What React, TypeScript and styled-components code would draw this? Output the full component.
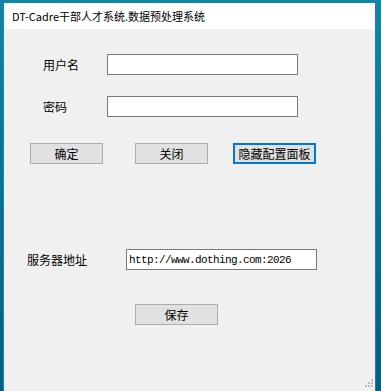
import React from "react";
import styled, { createGlobalStyle, css } from "styled-components";

const Global = createGlobalStyle`
  html, body { margin: 0; padding: 0; }
  body {
    width: 381px;
    height: 391px;
    overflow: hidden;
    background: linear-gradient(180deg, #0f87a3 0%, #0a7594 40%, #05607f 100%);
    font-family: "Noto Sans CJK SC", "Noto Sans", sans-serif;
  }
`;

const Desktop = styled.div`
  display: flex;
  padding: 3px 0 0 3px;
  height: 388px;
`;

const Window = styled.div`
  position: relative;
  width: 371px;
  height: 388px;
  display: flex;
  flex-direction: column;
  border-left: 1px solid #1c7fc4;
  border-right: 1px solid #1878d0;
`;

const TitleBar = styled.div`
  height: 26px;
  background: #ffffff;
  display: flex;
  align-items: center;
  padding-left: 8px;
  font-size: 11px;
  color: #000;
  white-space: nowrap;
`;

const Body = styled.div`
  flex: 1;
  background: #f0f0f0;
  display: flex;
  flex-direction: column;
`;

const Row = styled.div<{ $top: number; $left: number }>`
  display: flex;
  align-items: center;
  height: 21px;
  margin-top: ${(p) => p.$top}px;
  padding-left: ${(p) => p.$left}px;
`;

const Label = styled.span<{ $w: number }>`
  width: ${(p) => p.$w}px;
  font-size: 12px;
  color: #000;
  white-space: nowrap;
`;

const TextBox = styled.div`
  box-sizing: border-box;
  width: 191px;
  height: 21px;
  background: #fff;
  border: 1px solid #7a7a7a;
  display: flex;
  align-items: center;
  padding-left: 2px;
  font-family: "Liberation Mono", "DejaVu Sans Mono", monospace;
  font-size: 11px;
  letter-spacing: -0.6px;
  color: #000;
`;

const Button = styled.div<{ $w: number; $gap?: number; $focus?: boolean }>`
  box-sizing: border-box;
  width: ${(p) => p.$w}px;
  height: 21px;
  margin-left: ${(p) => p.$gap ?? 0}px;
  background: #e1e1e1;
  border: 1px solid #adadad;
  display: flex;
  align-items: center;
  justify-content: center;
  font-size: 12px;
  color: #000;
  white-space: nowrap;
  ${(p) =>
    p.$focus &&
    css`
      border: 2px solid #0078d7;
    `}
`;

const Grip = styled.svg`
  position: absolute;
  right: 2px;
  bottom: 2px;
`;

export default function App() {
  return (
    <>
      <Global />
      <Desktop>
        <Window>
          <TitleBar>DT-Cadre干部人才系统.数据预处理系统</TitleBar>
          <Body>
            <Row $top={25} $left={39}>
              <Label $w={64}>用户名</Label>
              <TextBox />
            </Row>
            <Row $top={21} $left={39}>
              <Label $w={64}>密码</Label>
              <TextBox />
            </Row>
            <Row $top={26} $left={26}>
              <Button $w={73}>确定</Button>
              <Button $w={73} $gap={32}>关闭</Button>
              <Button $w={83} $gap={25} $focus>
                隐藏配置面板
              </Button>
            </Row>
            <Row $top={85} $left={23}>
              <Label $w={99}>服务器地址</Label>
              <TextBox>http://www.dothing.com:2026</TextBox>
            </Row>
            <Row $top={34} $left={131}>
              <Button $w={83}>保存</Button>
            </Row>
          </Body>
          <Grip width="10" height="10" viewBox="0 0 10 10">
            {[
              [8, 0],
              [8, 3],
              [5, 3],
              [8, 6],
              [5, 6],
              [2, 6],
            ].map(([x, y], i) => (
              <rect key={i} x={x} y={y} width="2" height="2" fill="#bcbcbc" />
            ))}
          </Grip>
        </Window>
      </Desktop>
    </>
  );
}
